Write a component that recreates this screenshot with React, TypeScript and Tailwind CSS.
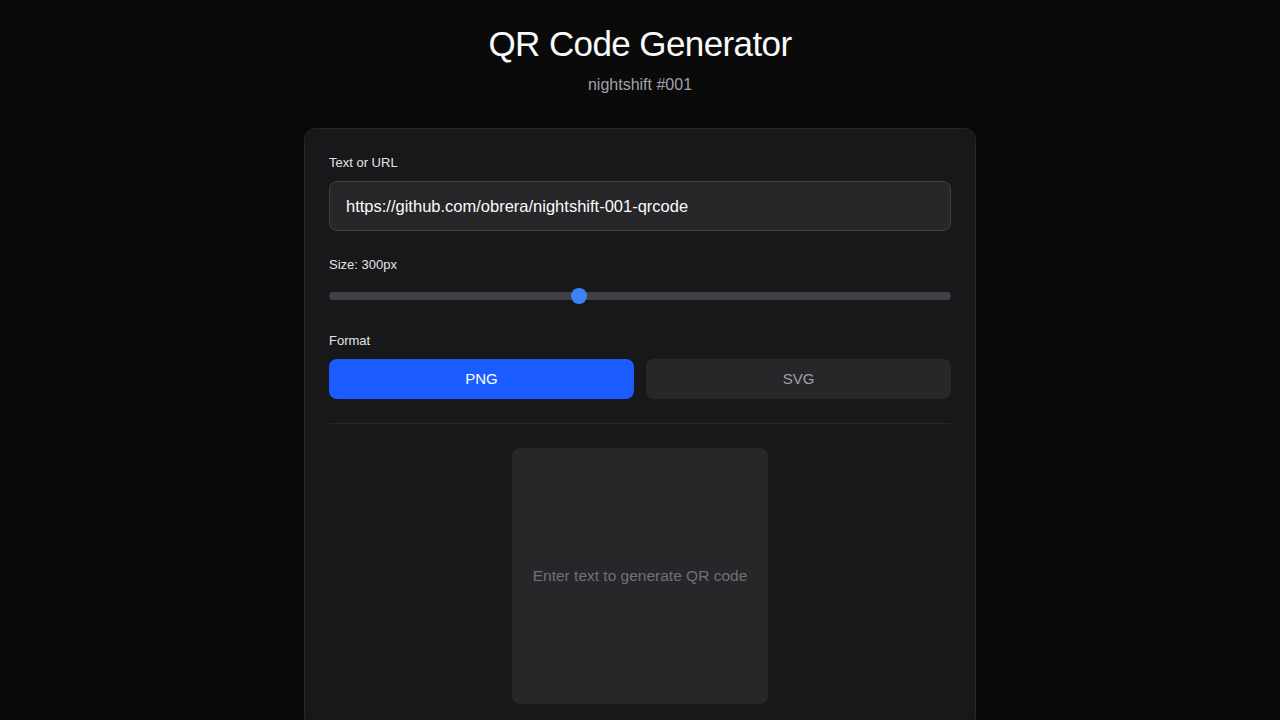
import { useState } from 'react';

export default function App() {
  const [text, setText] = useState('https://github.com/obrera/nightshift-001-qrcode');
  const [size, setSize] = useState(300);
  const [format, setFormat] = useState<'png' | 'svg'>('png');

  const pct = ((size - 100) / 500) * 100;

  return (
    <div
      className="min-h-screen bg-[#0a0a0a] text-white"
      style={{ fontFamily: '"Liberation Sans", Arial, sans-serif' }}
    >
      <div className="max-w-[672px] mx-auto pt-[22px]">
        <header className="text-center">
          <h1 className="text-[35px] leading-[44px] tracking-[-0.6px] text-[#fafafa]">QR Code Generator</h1>
          <p className="mt-[9px] text-[16px] leading-[20px] text-[#a1a1aa]">nightshift #001</p>
        </header>

        <main className="mt-[33px] bg-[#18181b] border border-[#27272a] rounded-xl px-6 pt-[25px] pb-6">
          <div>
            <label className="block text-[13px] leading-[18px] text-[#e4e4e7]">Text or URL</label>
            <input
              value={text}
              onChange={e => setText(e.target.value)}
              className="mt-[9px] w-full h-[50px] px-4 bg-[#27272a] border border-[#3f3f46] rounded-lg text-[16.5px] text-[#fafafa] outline-none"
            />
          </div>

          <div className="mt-[25px]">
            <label className="block text-[13px] leading-[18px] text-[#e4e4e7]">Size: {size}px</label>
            <div className="relative mt-[14px] h-4 flex items-center">
              <div className="w-full h-2 rounded-full bg-[#3f3f46]" />
              <div
                className="absolute w-4 h-4 rounded-full bg-[#3b82f6] -translate-x-1/2"
                style={{ left: `calc(${pct}% + 1px)` }}
              />
              <input
                type="range"
                min={100}
                max={600}
                value={size}
                onChange={e => setSize(Number(e.target.value))}
                className="absolute inset-0 w-full opacity-0 cursor-pointer"
              />
            </div>
          </div>

          <div className="mt-[28px]">
            <label className="block text-[13px] leading-[18px] text-[#e4e4e7]">Format</label>
            <div className="mt-[9px] grid grid-cols-2 gap-3">
              <button
                onClick={() => setFormat('png')}
                className={`h-10 rounded-lg text-[15px] ${format === 'png' ? 'bg-[#1a5cff] text-white' : 'bg-[#27272a] text-[#a1a1aa]'}`}
              >
                PNG
              </button>
              <button
                onClick={() => setFormat('svg')}
                className={`h-10 rounded-lg text-[15px] ${format === 'svg' ? 'bg-[#1a5cff] text-white' : 'bg-[#27272a] text-[#a1a1aa]'}`}
              >
                SVG
              </button>
            </div>
          </div>

          <div className="mt-6 border-t border-[#27272a] pt-6 flex justify-center">
            <div className="w-64 h-64 rounded-lg bg-[#27272a] flex items-center justify-center">
              <span className="text-[15.5px] text-[#71717a]">Enter text to generate QR code</span>
            </div>
          </div>
        </main>
      </div>
    </div>
  );
}
